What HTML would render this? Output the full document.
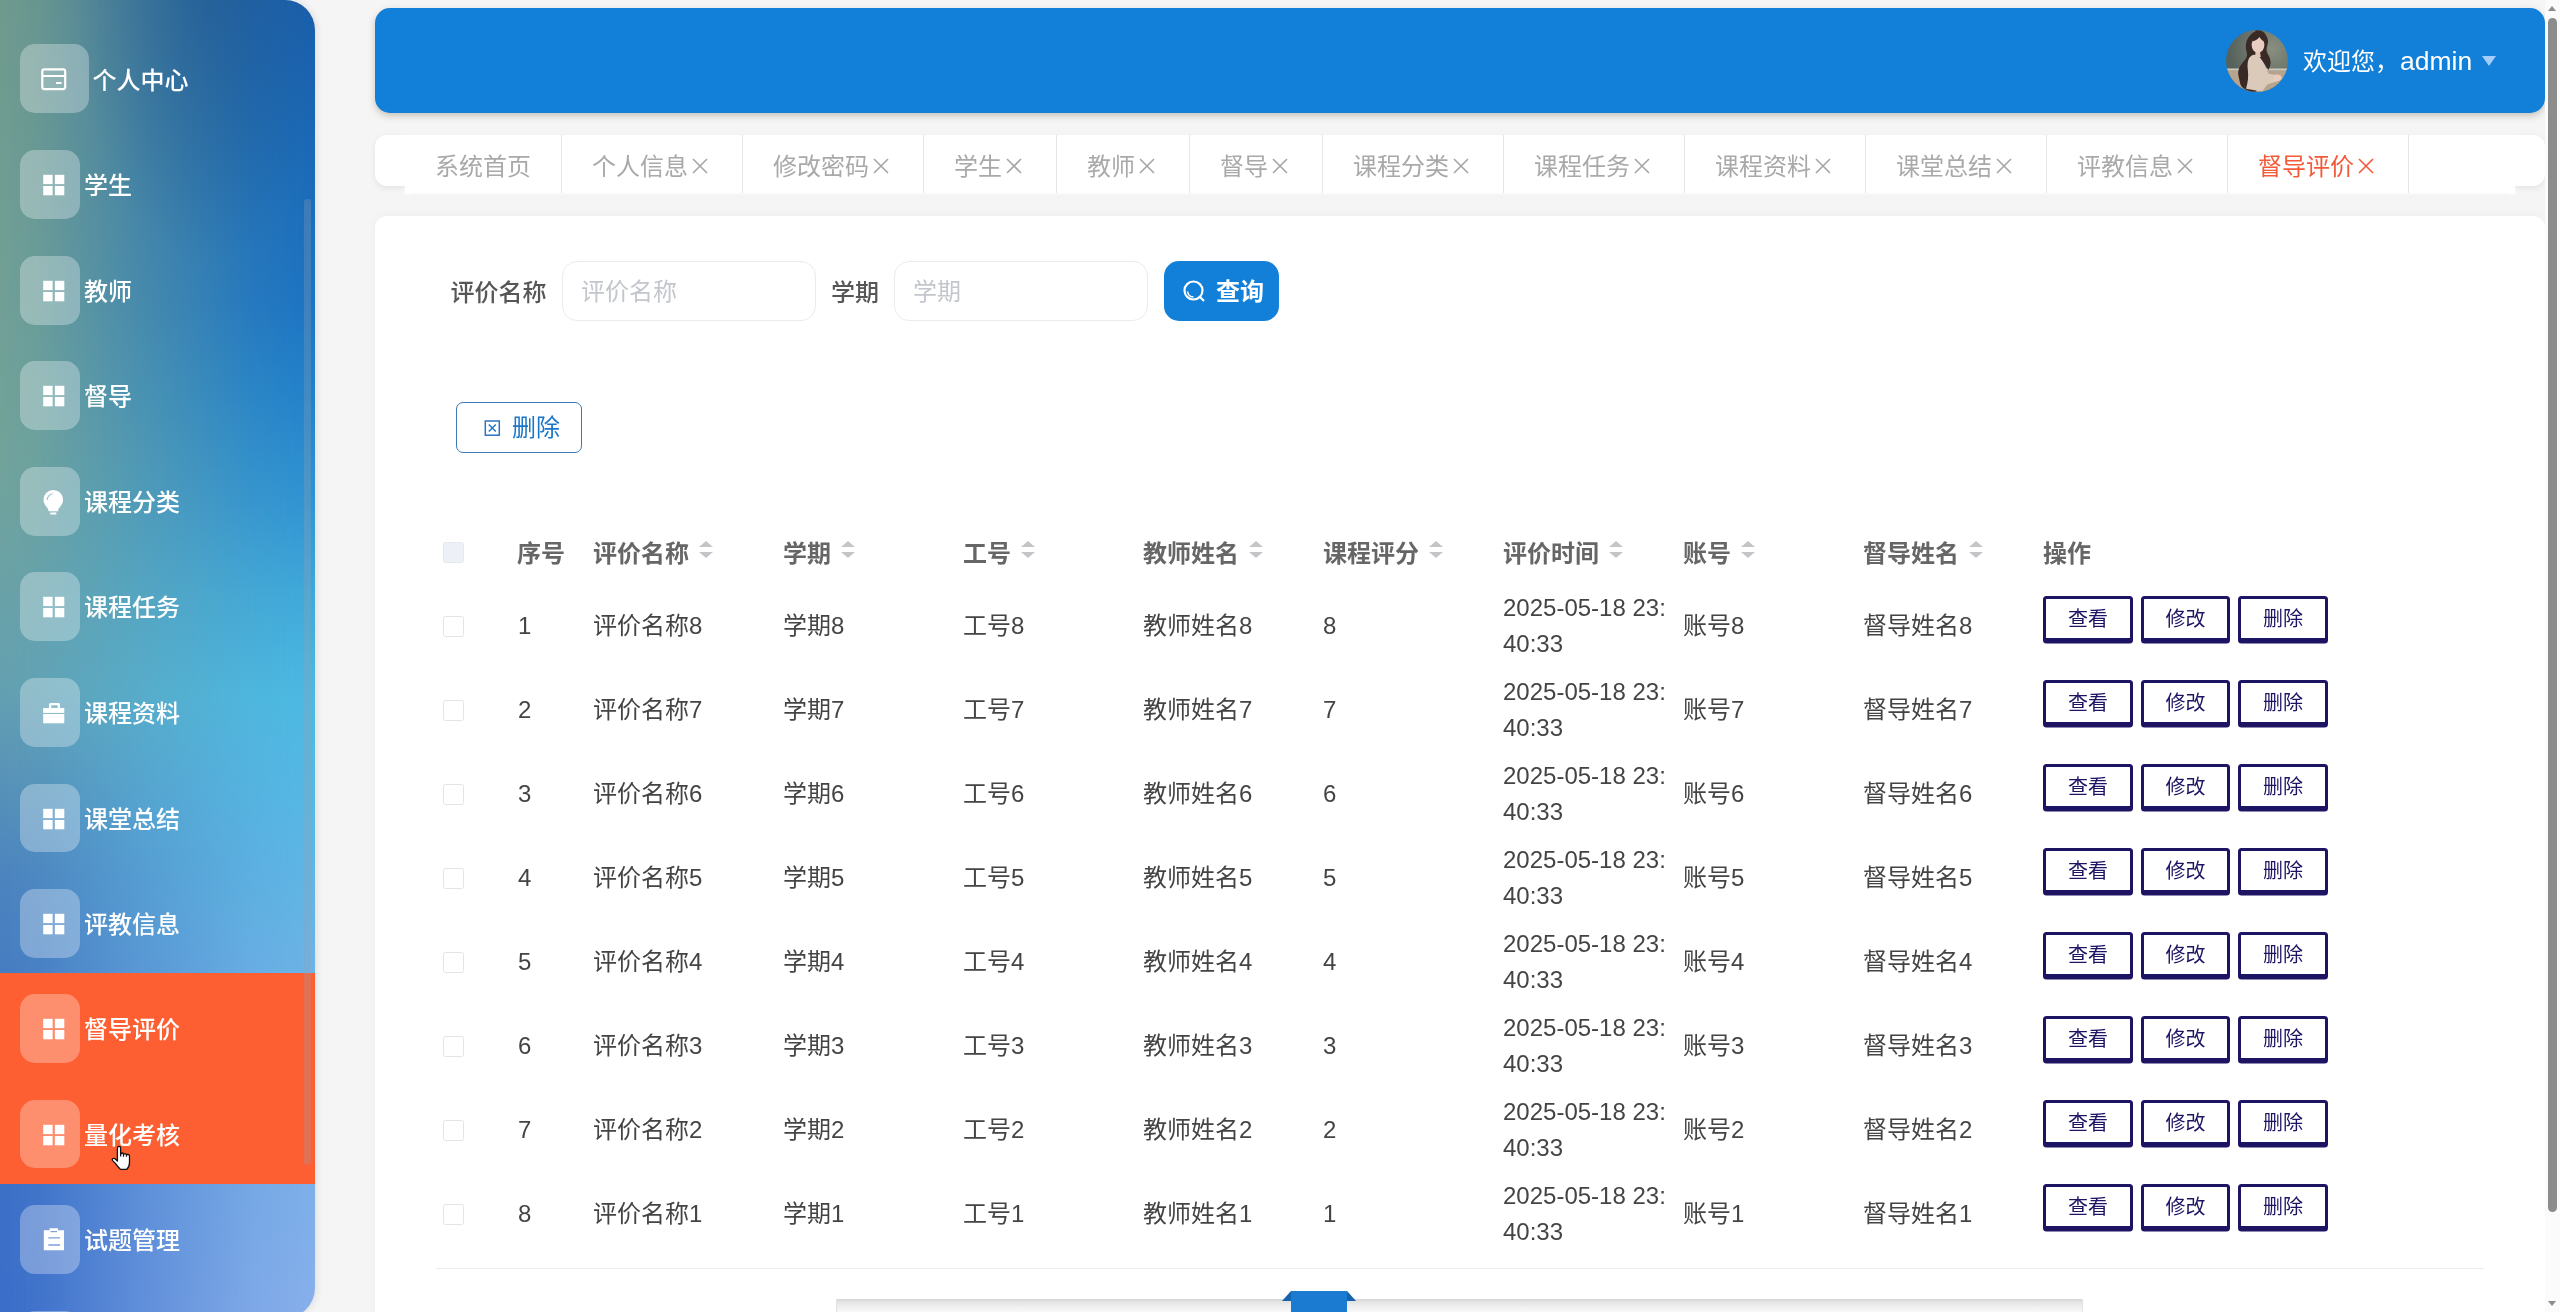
<!DOCTYPE html>
<html lang="zh-CN"><head><meta charset="utf-8"><title>督导评价</title>
<style>
*{box-sizing:border-box;margin:0;padding:0}
html,body{width:2560px;height:1312px;overflow:hidden;background:#f5f5f5}
body{position:relative;font-family:"Liberation Sans","Noto Sans CJK SC",sans-serif;font-size:24px;color:#333;-webkit-font-smoothing:antialiased}
.abs{position:absolute}
#root{position:absolute;left:0;top:0;width:2560px;height:1312px;overflow:hidden;will-change:transform}
/* sidebar */
#side{position:absolute;left:0;top:0;width:315px;height:1318px;border-radius:0 30px 30px 0;overflow:hidden;background:linear-gradient(180deg,#1a60ae 0%,#1a6ab8 12%,#1c74c4 23%,#2282cc 30%,#3094d4 38%,#40aadc 45.400%,#4cbae4 53%,#56b8e6 60.500%,#62b6e6 68%,#6cb4e8 73.400%,#7fb0ea 90.800%,#88b0ec 100%);box-shadow:2px 0 7px rgba(0,0,20,.09)}
#side .lg{position:absolute;left:0;top:0;width:315px;height:1322px;background:linear-gradient(180deg,#6f9a8d 0%,#72a39a 35%,#64a0b0 52%,#4c84be 66%,#3c70c6 85%,#3a6dc8 100%);-webkit-mask-image:linear-gradient(90deg,#000 0%,rgba(0,0,0,.92) 12%,rgba(0,0,0,.5) 45%,rgba(0,0,0,.12) 80%,transparent 100%);mask-image:linear-gradient(90deg,#000 0%,rgba(0,0,0,.92) 12%,rgba(0,0,0,.5) 45%,rgba(0,0,0,.12) 80%,transparent 100%)}
#side .dk{position:absolute;left:0;top:0;width:315px;height:400px;background:radial-gradient(ellipse 130px 260px at 205px 0,rgba(16,70,130,.34),rgba(16,70,130,0) 100%)}
#side .act{position:absolute;left:0;top:973.300px;width:315px;height:211px;background:#fd5f32}
#side .thumb{position:absolute;left:303.700px;top:198.700px;width:7.600px;height:966px;border-radius:3px;background:rgba(150,160,175,.28)}
.mi{position:absolute;left:0;width:315px;height:105.55px;color:#fff;font-weight:500}
.mi .ib{position:absolute;left:20px;top:21px;width:60px;height:68.800px;border-radius:15px;background:rgba(255,255,255,.3)}
.mi.first .ib{width:69px}
.mi .ib svg{position:absolute;left:0;top:0}
.mi .tx{position:absolute;left:84px;top:37px;height:40px;line-height:40px;font-size:24px;white-space:nowrap;letter-spacing:0}
.mi.first .tx{left:92.5px;top:38px}
/* header */
#hdr{position:absolute;left:375px;top:8px;width:2170px;height:104.500px;border-radius:15px;background:#127fd8;box-shadow:0 3px 7px rgba(90,80,50,.3)}
#hdr .av{position:absolute;left:1851.200px;top:21.500px;width:62px;height:62px;border-radius:50%;overflow:hidden}
#hdr .nm{position:absolute;left:1928px;top:31px;height:44px;line-height:44px;color:#fff;font-size:24px;white-space:nowrap}
#hdr .caret{position:absolute;left:2107px;top:47.5px;width:0;height:0;border-left:7.5px solid transparent;border-right:7.5px solid transparent;border-top:10.5px solid #a3cdfa}
/* tabs */
#tabwrap{position:absolute;left:375px;top:135.300px;width:2170px;height:51px;border-radius:12px;background:#fff;box-shadow:0 2px 6px rgba(0,0,0,.08)}
#tabs{position:absolute;left:405px;top:135px;width:2110px;height:58px;background:#fff;box-shadow:0 2px 4px rgba(255,255,255,.85),0 7px 7px -4px rgba(0,0,0,.045);display:flex;white-space:nowrap}
.tab{height:58px;line-height:58px;padding:0 30px;border-right:1px solid #e6e6e8;color:#a9a9a9;font-size:24px;display:flex;align-items:center}
.tab span{position:relative;top:2.700px}.tab .x{display:inline-block;width:24px;height:24px;margin-left:0;position:relative;top:2px}
.tab.on{color:#f45a3a}
/* card */
#card{position:absolute;left:375px;top:216px;width:2170px;height:1120px;border-radius:12px;background:#fff;box-shadow:0 0 10px rgba(0,0,0,.04)}
.lbl{position:absolute;top:272.5px;margin-left:-.5px;height:40px;line-height:40px;font-size:24px;font-weight:500;color:#565656;white-space:nowrap}
.inp{position:absolute;top:261px;width:254px;height:59.5px;border:1px solid #ebebec;border-radius:15px;background:#fff}
.inp span{position:absolute;left:18px;top:9.5px;height:40px;line-height:40px;color:#c3c6cc;font-size:24px;white-space:nowrap}
#qbtn{position:absolute;left:1164px;top:261px;width:114.5px;height:59.5px;border-radius:15px;background:#1280d9;color:#fff;font-weight:700;font-size:24px}
#qbtn span{position:absolute;left:52px;top:11px;height:40px;line-height:40px;white-space:nowrap}
#qbtn svg{position:absolute;left:17px;top:16.500px}
#dbtn{position:absolute;left:456px;top:402px;width:126px;height:51px;border:1.3px solid #3d78b8;border-radius:7px;background:#fff;color:#1b75c9;font-size:24px}
#dbtn span{position:absolute;left:55px;top:4.800px;height:40px;line-height:40px;white-space:nowrap}
#dbtn svg{position:absolute;left:25.700px;top:16.300px}
/* table */
.th{position:absolute;top:533.500px;height:40px;line-height:40px;font-weight:700;color:#666;font-size:24px;white-space:nowrap}
.th i{display:inline-block;position:absolute;width:14px;height:24px;margin-left:9.800px;top:.500px}
.th i:before{content:"";position:absolute;left:0;top:6.5px;border:7px solid transparent;border-bottom:6.5px solid #c4c5c8;border-top:0}
.th i:after{content:"";position:absolute;left:0;top:18px;border:7px solid transparent;border-top:6.5px solid #c4c5c8;border-bottom:0}
.td{position:absolute;height:36px;line-height:36px;font-size:24px;color:#444;white-space:nowrap}
.cb{position:absolute;left:443px;width:20.7px;height:20.7px;border:1px solid #e3e4e8;border-radius:2.5px;background:#fff}
.cb.h{background:#eef0f8;border-color:#e6e8f0}
.ob{position:absolute;width:89.7px;height:44.8px;border:3px solid #1d1464;border-radius:3.5px;background:#fff;color:#1d1464;font-size:20px;font-weight:400;text-align:center;line-height:41.5px;white-space:nowrap;box-shadow:0 2.6px 0 0 #1d1464}
#bline{position:absolute;left:436px;top:1267.5px;width:2048px;height:1.5px;background:#eceef2}
/* pagination peek */
#pg{position:absolute;left:836px;top:1298.500px;width:1247px;height:30px;background:linear-gradient(180deg,#d6d6d6 0,#e3e3e3 3px,#eeeeee 7px,#f8f8f8 13px,#fafafa 100%);border-left:1px solid #e2e2e2;border-right:1px solid #e2e2e2}
#rib{position:absolute;left:1291px;top:1291px;width:56px;height:30px;background:#1a7bd0}
#ribl{position:absolute;left:1282px;top:1291px;width:0;height:0;border-bottom:10.5px solid #1562ad;border-left:9px solid transparent}
#ribr{position:absolute;left:1347px;top:1291px;width:0;height:0;border-bottom:10.5px solid #1562ad;border-right:9px solid transparent}
/* page scrollbar */
#sb{position:absolute;left:2545px;top:0;width:15px;height:1312px;background:#fbfbfb}
#sb .t{position:absolute;left:3.100px;top:18px;width:8.800px;height:1194px;border-radius:4.400px;background:#8c8c8c}
#sb .up{position:absolute;left:3px;top:6px;width:0;height:0;border-left:4.500px solid transparent;border-right:4.500px solid transparent;border-bottom:5px solid #8c8c8c}#sb .dn{position:absolute;left:3px;top:1301px;width:0;height:0;border-left:4.500px solid transparent;border-right:4.500px solid transparent;border-top:5px solid #8c8c8c}
</style></head>
<body>
<div id="root">
<div id="side"><div class="lg"></div><div class="dk"></div><div class="act"></div>
<div class="mi first" style="top:23.0px"><div class="ib"><svg width="69" height="69" viewBox="0 0 69 69"><g fill="none" stroke="#fff" stroke-width="2.2"><rect x="22.3" y="25.4" width="22.9" height="19.7" rx="2"/><path d="M22.3 32H45.2M36 39h5.5"/></g></svg></div><div class="tx">个人中心</div></div>
<div class="mi " style="top:129.0px"><div class="ib"><svg width="60" height="69" viewBox="0 0 60 69"><g fill="#fff"><rect x="23.2" y="24.8" width="9.4" height="9.3"/><rect x="34.9" y="24.8" width="9.4" height="9.3"/><rect x="23.2" y="36" width="9.4" height="9.3"/><rect x="34.9" y="36" width="9.4" height="9.3"/></g></svg></div><div class="tx">学生</div></div>
<div class="mi " style="top:235.0px"><div class="ib"><svg width="60" height="69" viewBox="0 0 60 69"><g fill="#fff"><rect x="23.2" y="24.8" width="9.4" height="9.3"/><rect x="34.9" y="24.8" width="9.4" height="9.3"/><rect x="23.2" y="36" width="9.4" height="9.3"/><rect x="34.9" y="36" width="9.4" height="9.3"/></g></svg></div><div class="tx">教师</div></div>
<div class="mi " style="top:340.4px"><div class="ib"><svg width="60" height="69" viewBox="0 0 60 69"><g fill="#fff"><rect x="23.2" y="24.8" width="9.4" height="9.3"/><rect x="34.9" y="24.8" width="9.4" height="9.3"/><rect x="23.2" y="36" width="9.4" height="9.3"/><rect x="34.9" y="36" width="9.4" height="9.3"/></g></svg></div><div class="tx">督导</div></div>
<div class="mi " style="top:446.0px"><div class="ib"><svg width="60" height="69" viewBox="0 0 60 69"><path fill="#fff" d="M33.3 23a9.8 9.8 0 0 1 9.8 9.8c0 3.6-2 6-3.6 7.8-1 1.2-1.4 2.4-1.5 3.6h-9.4c-.1-1.2-.5-2.4-1.5-3.6-1.6-1.800-3.600-4.200-3.600-7.800a9.800 9.800 0 0 1 9.800-9.800z"/><rect fill="#fff" x="30.2" y="45.400" width="6.200" height="2.200" rx=".6"/><path fill="none" stroke="#9dc0cc" stroke-width="1.1" d="M27.300 33a6 6 0 0 1 5.400-6.200"/></svg></div><div class="tx">课程分类</div></div>
<div class="mi " style="top:551.4px"><div class="ib"><svg width="60" height="69" viewBox="0 0 60 69"><g fill="#fff"><rect x="23.2" y="24.8" width="9.4" height="9.3"/><rect x="34.9" y="24.8" width="9.4" height="9.3"/><rect x="23.2" y="36" width="9.4" height="9.3"/><rect x="34.9" y="36" width="9.4" height="9.3"/></g></svg></div><div class="tx">课程任务</div></div>
<div class="mi " style="top:656.8px"><div class="ib"><svg width="60" height="69" viewBox="0 0 60 69"><g fill="#fff"><path d="M29 30v-3.600a1.500 1.500 0 0 1 1.500-1.500h8a1.500 1.500 0 0 1 1.500 1.500V30h-2.300v-2.700h-6.400V30z"/><rect x="23.200" y="30" width="21.100" height="4.900"/><rect x="23.200" y="36" width="21.100" height="9.300"/></g></svg></div><div class="tx">课程资料</div></div>
<div class="mi " style="top:762.6px"><div class="ib"><svg width="60" height="69" viewBox="0 0 60 69"><g fill="#fff"><rect x="23.2" y="24.8" width="9.4" height="9.3"/><rect x="34.9" y="24.8" width="9.4" height="9.3"/><rect x="23.2" y="36" width="9.4" height="9.3"/><rect x="34.9" y="36" width="9.4" height="9.3"/></g></svg></div><div class="tx">课堂总结</div></div>
<div class="mi " style="top:868.0px"><div class="ib"><svg width="60" height="69" viewBox="0 0 60 69"><g fill="#fff"><rect x="23.2" y="24.8" width="9.4" height="9.3"/><rect x="34.9" y="24.8" width="9.4" height="9.3"/><rect x="23.2" y="36" width="9.4" height="9.3"/><rect x="34.9" y="36" width="9.4" height="9.3"/></g></svg></div><div class="tx">评教信息</div></div>
<div class="mi " style="top:973.2px"><div class="ib"><svg width="60" height="69" viewBox="0 0 60 69"><g fill="#fff"><rect x="23.2" y="24.8" width="9.4" height="9.3"/><rect x="34.9" y="24.8" width="9.4" height="9.3"/><rect x="23.2" y="36" width="9.4" height="9.3"/><rect x="34.9" y="36" width="9.4" height="9.3"/></g></svg></div><div class="tx">督导评价</div></div>
<div class="mi " style="top:1078.5px"><div class="ib"><svg width="60" height="69" viewBox="0 0 60 69"><g fill="#fff"><rect x="23.2" y="24.8" width="9.4" height="9.3"/><rect x="34.9" y="24.8" width="9.4" height="9.3"/><rect x="23.2" y="36" width="9.4" height="9.3"/><rect x="34.9" y="36" width="9.4" height="9.3"/></g></svg></div><div class="tx">量化考核</div></div>
<div class="mi " style="top:1184.0px"><div class="ib"><svg width="60" height="69" viewBox="0 0 60 69"><path fill="#fff" d="M29.600 23.300h8.400v2h6v20h-20.200v-20h5.800z"/><path fill="none" stroke="#7e9fdc" stroke-width="1.400" d="M28.300 32.900H40M28.300 40H40"/><path fill="none" stroke="#7e9fdc" stroke-width="1.200" d="M30.600 26.600h6.400"/></svg></div><div class="tx">试题管理</div></div>
<div class="mi " style="top:1289.5px"><div class="ib"></div><div class="tx"></div></div>
<div class="thumb"></div></div>
<div id="hdr"><div class="av"><svg width="62" height="62" viewBox="0 0 62 62"><defs><radialGradient id="bgv" cx=".75" cy=".3" r=".7"><stop offset="0" stop-color="#8a9080"/><stop offset="1" stop-color="#56625c"/></radialGradient></defs><rect width="62" height="62" fill="url(#bgv)"/><rect y="38.500" width="62" height="2.200" fill="#cfcabd"/><rect y="40.700" width="62" height="22" fill="#b7a48f"/><path d="M29.400.600c5-1 9 1 10 4 2 3 3 5 2.500 8-.4 3-1.500 5-1.300 8 .3 3 2.500 5 3.200 7.500.8 2.500 1 4.500.6 6.300-.3 1.800-1 3.800-1.900 5.600l-6-9-8 2 1 14 1 14.500-5 .900-6.400-3c-3.500-2-5-5-5.400-8-.5-4-2-6-1.400-10 .5-4 2.600-6 4.400-8.800 2-3 4.500-4.600 4.300-8-.2-3-1.400-5-1.200-9 .2-4 1.500-7 3.800-9.600 1.500-2 3.500-3.600 5.700-4.400z" fill="#3a2a26"/><ellipse cx="32" cy="14.600" rx="6.400" ry="8.400" fill="#e9cdc0"/><path d="M27 6.500c2-2 7-2.500 9.500 0 1 1.500 1.600 3 1.800 5-2-1-3.600-2.600-4.800-4.600-1.500 2-4 3.600-7.300 4.600.1-2 .3-3.600.8-5z" fill="#3a2a26"/><path d="M29.500 22h4.500l.8 5-5.800.5z" fill="#e2c4b6"/><path d="M25.600 25.600c2.400-1.600 5.800-1.300 8.800 2.500 3 3.700 5.700 9.700 8.100 15.600l8.500 1.600c2.500-.5 4.400.3 4.700 2 .3 2-1.300 3.400-3.700 3.800l-10.800 3.300-5.200 7.100-16-2.700c1.800-5.800 2.600-11.600 1.900-18.200-.7-6.500-.4-12.300 3.700-15z" fill="#dbcab9"/><path d="M47.500 45.500c2-1.300 5-1.300 7 .3 1.300 1.400.8 3.400-.8 4.400-2 1.100-4.600 1.400-6.600.5z" fill="#e8cdbd"/></svg></div><div class="nm">欢迎您，<span style="font-size:26.500px;margin-left:1px">admin</span></div><div class="caret"></div></div>
<div id="tabwrap"></div><div id="tabs"><div class="tab"><span>系统首页</span></div><div class="tab"><span>个人信息</span><svg class="x" viewBox="0 0 24 24"><path d="M5 5l14 14M19 5l-14 14" stroke="#a6a6a6" stroke-width="1.600" fill="none"/></svg></div><div class="tab"><span>修改密码</span><svg class="x" viewBox="0 0 24 24"><path d="M5 5l14 14M19 5l-14 14" stroke="#a6a6a6" stroke-width="1.600" fill="none"/></svg></div><div class="tab"><span>学生</span><svg class="x" viewBox="0 0 24 24"><path d="M5 5l14 14M19 5l-14 14" stroke="#a6a6a6" stroke-width="1.600" fill="none"/></svg></div><div class="tab"><span>教师</span><svg class="x" viewBox="0 0 24 24"><path d="M5 5l14 14M19 5l-14 14" stroke="#a6a6a6" stroke-width="1.600" fill="none"/></svg></div><div class="tab"><span>督导</span><svg class="x" viewBox="0 0 24 24"><path d="M5 5l14 14M19 5l-14 14" stroke="#a6a6a6" stroke-width="1.600" fill="none"/></svg></div><div class="tab"><span>课程分类</span><svg class="x" viewBox="0 0 24 24"><path d="M5 5l14 14M19 5l-14 14" stroke="#a6a6a6" stroke-width="1.600" fill="none"/></svg></div><div class="tab"><span>课程任务</span><svg class="x" viewBox="0 0 24 24"><path d="M5 5l14 14M19 5l-14 14" stroke="#a6a6a6" stroke-width="1.600" fill="none"/></svg></div><div class="tab"><span>课程资料</span><svg class="x" viewBox="0 0 24 24"><path d="M5 5l14 14M19 5l-14 14" stroke="#a6a6a6" stroke-width="1.600" fill="none"/></svg></div><div class="tab"><span>课堂总结</span><svg class="x" viewBox="0 0 24 24"><path d="M5 5l14 14M19 5l-14 14" stroke="#a6a6a6" stroke-width="1.600" fill="none"/></svg></div><div class="tab"><span>评教信息</span><svg class="x" viewBox="0 0 24 24"><path d="M5 5l14 14M19 5l-14 14" stroke="#a6a6a6" stroke-width="1.600" fill="none"/></svg></div><div class="tab on"><span>督导评价</span><svg class="x" viewBox="0 0 24 24"><path d="M5 5l14 14M19 5l-14 14" stroke="#f45a3a" stroke-width="1.600" fill="none"/></svg></div></div>
<div id="card"></div><div class="lbl" style="left:451px">评价名称</div><div class="inp" style="left:562px"><span>评价名称</span></div><div class="lbl" style="left:831.400px">学期</div><div class="inp" style="left:894px"><span>学期</span></div><div id="qbtn"><svg width="26" height="26" viewBox="0 0 26 26"><circle cx="12.500" cy="12.500" r="9" fill="none" stroke="#fff" stroke-width="2.200"/><path d="M19 19l4 4" stroke="#fff" stroke-width="2.200" fill="none"/><path d="M6.500 13.500a6.500 6.500 0 0 0 6 5.500" stroke="#fff" stroke-width="1.600" fill="none"/></svg><span>查询</span></div><div id="dbtn"><svg width="18" height="18" viewBox="0 0 18 18"><rect x="2.300" y="2" width="14" height="14.200" fill="none" stroke="#2a74c0" stroke-width="1.500"/><path d="M5.800 5.500l7 7M12.800 5.500l-7 7" stroke="#2a74c0" stroke-width="1.500"/></svg><span>删除</span></div>
<div class="cb h" style="top:542px"></div>
<div class="th" style="left:517px">序号</div>
<div class="th" style="left:593px">评价名称<i></i></div>
<div class="th" style="left:783px">学期<i></i></div>
<div class="th" style="left:963px">工号<i></i></div>
<div class="th" style="left:1143px">教师姓名<i></i></div>
<div class="th" style="left:1323px">课程评分<i></i></div>
<div class="th" style="left:1503px">评价时间<i></i></div>
<div class="th" style="left:1683px">账号<i></i></div>
<div class="th" style="left:1863px">督导姓名<i></i></div>
<div class="th" style="left:2043px">操作</div>
<div class="cb" style="top:616.2px"></div>
<div class="td" style="left:518px;top:608px">1</div>
<div class="td" style="left:593px;top:608px">评价名称8</div>
<div class="td" style="left:783px;top:608px">学期8</div>
<div class="td" style="left:963px;top:608px">工号8</div>
<div class="td" style="left:1143px;top:608px">教师姓名8</div>
<div class="td" style="left:1323px;top:608px">8</div>
<div class="td" style="left:1683px;top:608px">账号8</div>
<div class="td" style="left:1863px;top:608px">督导姓名8</div>
<div class="td" style="left:1503px;top:590px">2025-05-18 23:</div><div class="td" style="left:1503px;top:626px">40:33</div>
<div class="ob" style="left:2043.1px;top:596.2px">查看</div>
<div class="ob" style="left:2140.6px;top:596.2px">修改</div>
<div class="ob" style="left:2238.1px;top:596.2px">删除</div>
<div class="cb" style="top:700.2px"></div>
<div class="td" style="left:518px;top:692px">2</div>
<div class="td" style="left:593px;top:692px">评价名称7</div>
<div class="td" style="left:783px;top:692px">学期7</div>
<div class="td" style="left:963px;top:692px">工号7</div>
<div class="td" style="left:1143px;top:692px">教师姓名7</div>
<div class="td" style="left:1323px;top:692px">7</div>
<div class="td" style="left:1683px;top:692px">账号7</div>
<div class="td" style="left:1863px;top:692px">督导姓名7</div>
<div class="td" style="left:1503px;top:674px">2025-05-18 23:</div><div class="td" style="left:1503px;top:710px">40:33</div>
<div class="ob" style="left:2043.1px;top:680.2px">查看</div>
<div class="ob" style="left:2140.6px;top:680.2px">修改</div>
<div class="ob" style="left:2238.1px;top:680.2px">删除</div>
<div class="cb" style="top:784.2px"></div>
<div class="td" style="left:518px;top:776px">3</div>
<div class="td" style="left:593px;top:776px">评价名称6</div>
<div class="td" style="left:783px;top:776px">学期6</div>
<div class="td" style="left:963px;top:776px">工号6</div>
<div class="td" style="left:1143px;top:776px">教师姓名6</div>
<div class="td" style="left:1323px;top:776px">6</div>
<div class="td" style="left:1683px;top:776px">账号6</div>
<div class="td" style="left:1863px;top:776px">督导姓名6</div>
<div class="td" style="left:1503px;top:758px">2025-05-18 23:</div><div class="td" style="left:1503px;top:794px">40:33</div>
<div class="ob" style="left:2043.1px;top:764.2px">查看</div>
<div class="ob" style="left:2140.6px;top:764.2px">修改</div>
<div class="ob" style="left:2238.1px;top:764.2px">删除</div>
<div class="cb" style="top:868.2px"></div>
<div class="td" style="left:518px;top:860px">4</div>
<div class="td" style="left:593px;top:860px">评价名称5</div>
<div class="td" style="left:783px;top:860px">学期5</div>
<div class="td" style="left:963px;top:860px">工号5</div>
<div class="td" style="left:1143px;top:860px">教师姓名5</div>
<div class="td" style="left:1323px;top:860px">5</div>
<div class="td" style="left:1683px;top:860px">账号5</div>
<div class="td" style="left:1863px;top:860px">督导姓名5</div>
<div class="td" style="left:1503px;top:842px">2025-05-18 23:</div><div class="td" style="left:1503px;top:878px">40:33</div>
<div class="ob" style="left:2043.1px;top:848.2px">查看</div>
<div class="ob" style="left:2140.6px;top:848.2px">修改</div>
<div class="ob" style="left:2238.1px;top:848.2px">删除</div>
<div class="cb" style="top:952.2px"></div>
<div class="td" style="left:518px;top:944px">5</div>
<div class="td" style="left:593px;top:944px">评价名称4</div>
<div class="td" style="left:783px;top:944px">学期4</div>
<div class="td" style="left:963px;top:944px">工号4</div>
<div class="td" style="left:1143px;top:944px">教师姓名4</div>
<div class="td" style="left:1323px;top:944px">4</div>
<div class="td" style="left:1683px;top:944px">账号4</div>
<div class="td" style="left:1863px;top:944px">督导姓名4</div>
<div class="td" style="left:1503px;top:926px">2025-05-18 23:</div><div class="td" style="left:1503px;top:962px">40:33</div>
<div class="ob" style="left:2043.1px;top:932.2px">查看</div>
<div class="ob" style="left:2140.6px;top:932.2px">修改</div>
<div class="ob" style="left:2238.1px;top:932.2px">删除</div>
<div class="cb" style="top:1036.2px"></div>
<div class="td" style="left:518px;top:1028px">6</div>
<div class="td" style="left:593px;top:1028px">评价名称3</div>
<div class="td" style="left:783px;top:1028px">学期3</div>
<div class="td" style="left:963px;top:1028px">工号3</div>
<div class="td" style="left:1143px;top:1028px">教师姓名3</div>
<div class="td" style="left:1323px;top:1028px">3</div>
<div class="td" style="left:1683px;top:1028px">账号3</div>
<div class="td" style="left:1863px;top:1028px">督导姓名3</div>
<div class="td" style="left:1503px;top:1010px">2025-05-18 23:</div><div class="td" style="left:1503px;top:1046px">40:33</div>
<div class="ob" style="left:2043.1px;top:1016.2px">查看</div>
<div class="ob" style="left:2140.6px;top:1016.2px">修改</div>
<div class="ob" style="left:2238.1px;top:1016.2px">删除</div>
<div class="cb" style="top:1120.2px"></div>
<div class="td" style="left:518px;top:1112px">7</div>
<div class="td" style="left:593px;top:1112px">评价名称2</div>
<div class="td" style="left:783px;top:1112px">学期2</div>
<div class="td" style="left:963px;top:1112px">工号2</div>
<div class="td" style="left:1143px;top:1112px">教师姓名2</div>
<div class="td" style="left:1323px;top:1112px">2</div>
<div class="td" style="left:1683px;top:1112px">账号2</div>
<div class="td" style="left:1863px;top:1112px">督导姓名2</div>
<div class="td" style="left:1503px;top:1094px">2025-05-18 23:</div><div class="td" style="left:1503px;top:1130px">40:33</div>
<div class="ob" style="left:2043.1px;top:1100.2px">查看</div>
<div class="ob" style="left:2140.6px;top:1100.2px">修改</div>
<div class="ob" style="left:2238.1px;top:1100.2px">删除</div>
<div class="cb" style="top:1204.2px"></div>
<div class="td" style="left:518px;top:1196px">8</div>
<div class="td" style="left:593px;top:1196px">评价名称1</div>
<div class="td" style="left:783px;top:1196px">学期1</div>
<div class="td" style="left:963px;top:1196px">工号1</div>
<div class="td" style="left:1143px;top:1196px">教师姓名1</div>
<div class="td" style="left:1323px;top:1196px">1</div>
<div class="td" style="left:1683px;top:1196px">账号1</div>
<div class="td" style="left:1863px;top:1196px">督导姓名1</div>
<div class="td" style="left:1503px;top:1178px">2025-05-18 23:</div><div class="td" style="left:1503px;top:1214px">40:33</div>
<div class="ob" style="left:2043.1px;top:1184.2px">查看</div>
<div class="ob" style="left:2140.6px;top:1184.2px">修改</div>
<div class="ob" style="left:2238.1px;top:1184.2px">删除</div>
<div id="bline"></div>
<div id="pg"></div><div id="ribl"></div><div id="ribr"></div><div id="rib"></div>
<svg class="abs" style="left:110px;top:1144px" width="24" height="30" viewBox="0 0 24 30"><path d="M7.400 4.200Q7.400 2.400 9 2.400Q10.600 2.400 10.600 4.200L10.600 10.400Q10.800 9 12.100 9Q13.500 9 13.500 10.600Q13.700 9.600 15 9.600Q16.400 9.600 16.400 11.300Q16.700 10.400 17.900 10.400Q19.500 10.400 19.500 12.400L19.500 18.500Q19.500 23 16.600 25.400L10.500 25.400Q8 23 5.600 19.600L2.600 16.600Q1.700 15.200 3 14.500Q4.500 14 5.600 15.200L7.400 17Z" fill="#fff" stroke="#111" stroke-width="1.300" stroke-linejoin="round"/><path d="M10.600 10v2.600M13.500 10.500v2.200M16.500 11.200v1.600" stroke="#111" stroke-width="1.200" fill="none"/></svg>
<div id="sb"><div class="up"></div><div class="t"></div><div class="dn"></div></div>
</div>
</body></html>
